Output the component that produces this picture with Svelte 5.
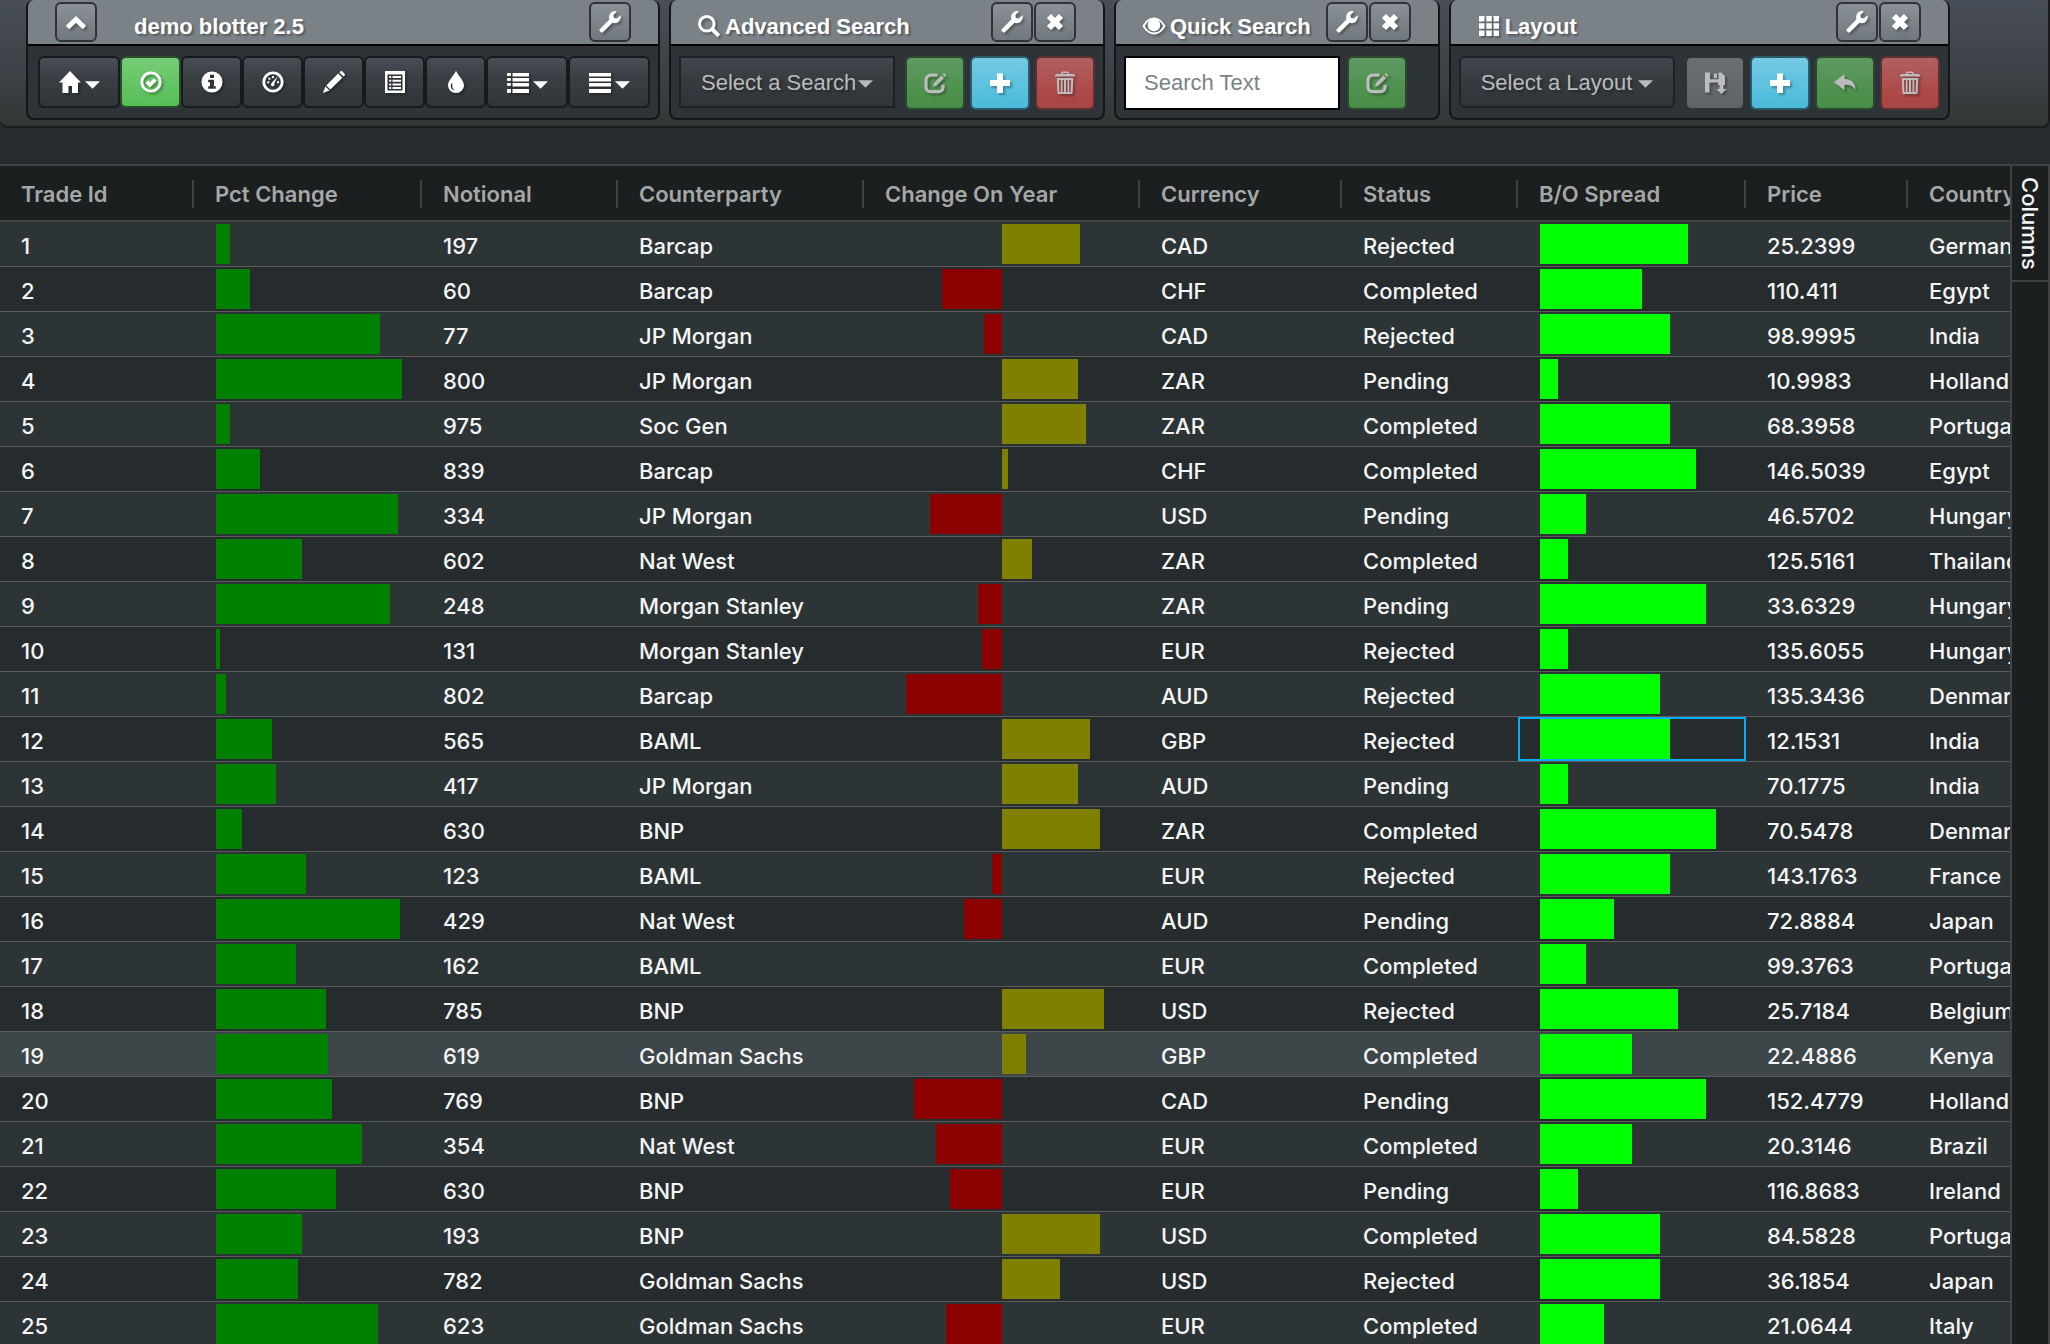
<script>
  const icons = {
    up: '<path d="M2.5 16.5 11 8.5l8.500 8" fill="none" stroke="currentColor" stroke-width="5"/>',
    wrench:
      '<path d="M.8 18.200 10.400 8.600C9.400 5 11 1.200 14.600.3c1-.3 2-.2 3.200.1L14.400 3.900l.5 3.100 3.100.5L21.500 4.200c.6 2.500-.2 4.900-1.900 6.500-1.600 1.500-4.100 1.800-6.100 1L3.900 21.300c-.5.5-1.200.5-1.700 0L.7 19.900c-.5-.5-.4-1.200.1-1.700z"/>',
    close: '<path d="m5 5 12 12M17 5 5 17" fill="none" stroke="currentColor" stroke-width="6"/>',
    home: '<path d="M11 0 22 11.500h-3V22h-6v-7H9.500v7h-6V11.500H0z"/>',
    okCircle:
      '<circle cx="11" cy="11" r="9.200" fill="none" stroke="currentColor" stroke-width="2.800"/><path d="m6.800 10.600 3.200 3.200 5.200-5.200" fill="none" stroke="currentColor" stroke-width="3.800"/>',
    info: '<path fill-rule="evenodd" d="M11 .5a10.500 10.500 0 1 0 0 21 10.500 10.500 0 0 0 0-21zM9 3.800h4v3.300H9zM7.200 8.800H13v6.500h1.800v2.500H7.200v-2.500H9v-4H7.200z"/>',
    gauge:
      '<circle cx="11" cy="11" r="9.200" fill="none" stroke="currentColor" stroke-width="2.800"/><path d="M5.200 10.200h2v2h-2zM6.400 6.800h2v2h-2zM9.900 4.900h2v2h-2zM15 10.200h2v2h-2z"/><path d="M15.600 5.200 12.300 12.500a1.800 1.800 0 1 1-2.600-.5z"/>',
    pencil:
      '<path d="M16.400 1.400 17.600.3c.5-.4 1-.4 1.500 0l2.600 2.600c.4.500.4 1 0 1.500l-1.200 1.200zM15.200 2.600l4.100 4.100L7.400 18.600l-4.100-4.100zM2.400 15.500l4.100 4.100L0 22z"/>',
    listAlt:
      '<path fill-rule="evenodd" d="M1 0h20v22H1zM3.500 3.500v16h15v-16z"/><path d="M5.200 5h2v2h-2zM8.500 5h8.500v2H8.500zM5.200 8.700h2v2h-2zM8.500 8.700h8.500v2H8.500zM5.200 12.400h2v2h-2zM8.500 12.400h8.500v2H8.500zM5.200 16h2v2h-2zM8.500 16h8.500v2H8.500z"/>',
    drop: '<path fill-rule="evenodd" d="M11-.8c.8 4.300 8 9.300 8 15.200A8 7.600 0 0 1 3 14.400C3 8.500 10.200 3.500 11-.8zM6.400 12.200c-1.500 3.200-.2 6.400 3.200 7.300-2-2-2.900-4-2.200-7z"/>',
    list: '<path d="M1 2h2a1 1 0 0 1 1 1v1a1 1 0 0 1-1 1H1a1 1 0 0 1-1-1V3a1 1 0 0 1 1-1zM5.500 2H22v3.500H5.500zM1 7h2a1 1 0 0 1 1 1v1a1 1 0 0 1-1 1H1a1 1 0 0 1-1-1V8a1 1 0 0 1 1-1zM5.500 7H22v3.500H5.500zM1 12h2a1 1 0 0 1 1 1v1a1 1 0 0 1-1 1H1a1 1 0 0 1-1-1v-1a1 1 0 0 1 1-1zM5.500 12H22v3.500H5.500zM1 18h2a1 1 0 0 1 1 1v2a1 1 0 0 1-1 1H1a1 1 0 0 1-1-1v-2a1 1 0 0 1 1-1zM5.500 18H22v4H5.500z"/>',
    justify: '<path d="M0 2h22v3.500H0zM0 7h22v3.500H0zM0 12h22v3.500H0zM0 18h22v4H0z"/>',
    search:
      '<circle cx="8.800" cy="8.800" r="7.300" fill="none" stroke="currentColor" stroke-width="3"/><path d="m14 14 6.800 6.800" fill="none" stroke="currentColor" stroke-width="4"/>',
    edit: '<path d="M13.500 3.200H6.500a4.500 4.500 0 0 0-4.500 4.500v7.500a4.500 4.500 0 0 0 4.500 4.500h8a4.500 4.500 0 0 0 4.500-4.500v-2.500" fill="none" stroke="currentColor" stroke-width="3.200"/><path d="M17.300 3.600 20 6.300 12.500 13.400 8.800 14.700 10 11zM18.600 2.300 20 1l2.400 2.600-1.200 1.400z"/>',
    plus: '<path d="M8 1.500h6V8h7v6h-7v7H8v-7H1V8h7z"/>',
    trash:
      '<path fill-rule="evenodd" d="M7 2V1a1.800 1.800 0 0 1 1.800-1.500h4.400A1.800 1.800 0 0 1 15 1v1h4.500l1.500 1v1.600H1V3l1.500-1zM8.600 2h4.800V1H8.600z"/><path fill-rule="evenodd" d="M2.800 6h16.400l-.6 14.500A1.600 1.600 0 0 1 17 22H5a1.600 1.600 0 0 1-1.600-1.500zM5 8l.4 12h1.400V8zM8.500 8v12H10V8zM12 8v12h1.500V8zM15.200 8v12h1.400L17 8z"/>',
    eye: '<path fill-rule="evenodd" d="M11 2.500c5 0 9 4 11.500 8.500C20 15.500 16 19.500 11 19.500S2 15.500-.5 11C2 6.500 6 2.500 11 2.500zM6.500 5.700C4.300 6.900 3 8.800 1.800 11c2 3.700 5.200 6.500 9.200 6.500s7.200-2.800 9.200-6.500c-1.200-2.200-2.500-4.100-4.700-5.300a6.300 6.300 0 1 1-9 0z"/><path d="M11 5.200a5 5 0 0 1 4.600 4.900 4.600 4.600 0 0 1-9.200 0c0-1.200.4-2.200 1.100-3 .2 2.200 1 3.500 2.700 3.900 1-2 1.600-3.800.8-5.800z"/>',
    grid: '<path d="M1 1h5.500v5.500H1zM8.300 1h5.500v5.500H8.300zM15.600 1H21v5.500h-5.400zM1 8.300h5.500v5.500H1zM8.300 8.300h5.500v5.500H8.300zM15.600 8.300H21v5.500h-5.400zM1 15.600h5.500V21H1zM8.300 15.600h5.500V21H8.300zM15.600 15.600H21V21h-5.400z"/>',
    save: '<path d="M1 .5h5v6.800h8.500V.5h2.800L21 4v9h-7v-2.500H5.500V20.500H1zM10 1.500h3v4.500h-3z"/><path d="M15.500 11.500h4V17h3L17.500 22l-5-5h3z"/>',
    undo: '<path d="M10.500 2v5C17 7 21.500 10.500 21.700 17.700 19 14 15.500 12.700 10.500 12.700v5.600L0 10.200z"/>'
  };

  const tools = [
    { icon: 'home', label: 'Dashboard home', caret: true },
    { icon: 'okCircle', label: 'Status', green: true },
    { icon: 'info', label: 'Information' },
    { icon: 'gauge', label: 'Gauges' },
    { icon: 'pencil', label: 'Edit' },
    { icon: 'listAlt', label: 'Column chooser' },
    { icon: 'drop', label: 'Theme' },
    { icon: 'list', label: 'Functions', caret: true },
    { icon: 'justify', label: 'Menu', caret: true }
  ];

  const columns = [
    ['Trade Id', 'w194'],
    ['Pct Change', 'w228'],
    ['Notional', 'w196'],
    ['Counterparty', 'w246'],
    ['Change On Year', 'w276'],
    ['Currency', 'w202'],
    ['Status', 'w176'],
    ['B/O Spread', 'w228'],
    ['Price', 'w162'],
    ['Country', 'w196']
  ];

  // pct change, notional, counterparty, change on year, currency, status, spread, price, country
  const rows = [
    [7, 197, 'Barcap', 39, 'CAD', 'Rejected', 74, '25.2399', 'Germany'],
    [17, 60, 'Barcap', -30, 'CHF', 'Completed', 51, '110.411', 'Egypt'],
    [82, 77, 'JP Morgan', -9, 'CAD', 'Rejected', 65, '98.9995', 'India'],
    [93, 800, 'JP Morgan', 38, 'ZAR', 'Pending', 9, '10.9983', 'Holland'],
    [7, 975, 'Soc Gen', 42, 'ZAR', 'Completed', 65, '68.3958', 'Portugal'],
    [22, 839, 'Barcap', 3, 'CHF', 'Completed', 78, '146.5039', 'Egypt'],
    [91, 334, 'JP Morgan', -36, 'USD', 'Pending', 23, '46.5702', 'Hungary'],
    [43, 602, 'Nat West', 15, 'ZAR', 'Completed', 14, '125.5161', 'Thailand'],
    [87, 248, 'Morgan Stanley', -12, 'ZAR', 'Pending', 83, '33.6329', 'Hungary'],
    [2, 131, 'Morgan Stanley', -10, 'EUR', 'Rejected', 14, '135.6055', 'Hungary'],
    [5, 802, 'Barcap', -48, 'AUD', 'Rejected', 60, '135.3436', 'Denmark'],
    [28, 565, 'BAML', 44, 'GBP', 'Rejected', 65, '12.1531', 'India'],
    [30, 417, 'JP Morgan', 38, 'AUD', 'Pending', 14, '70.1775', 'India'],
    [13, 630, 'BNP', 49, 'ZAR', 'Completed', 88, '70.5478', 'Denmark'],
    [45, 123, 'BAML', -5, 'EUR', 'Rejected', 65, '143.1763', 'France'],
    [92, 429, 'Nat West', -19, 'AUD', 'Pending', 37, '72.8884', 'Japan'],
    [40, 162, 'BAML', 0, 'EUR', 'Completed', 23, '99.3763', 'Portugal'],
    [55, 785, 'BNP', 51, 'USD', 'Rejected', 69, '25.7184', 'Belgium'],
    [56, 619, 'Goldman Sachs', 12, 'GBP', 'Completed', 46, '22.4886', 'Kenya'],
    [58, 769, 'BNP', -44, 'CAD', 'Pending', 83, '152.4779', 'Holland'],
    [73, 354, 'Nat West', -33, 'EUR', 'Completed', 46, '20.3146', 'Brazil'],
    [60, 630, 'BNP', -26, 'EUR', 'Pending', 19, '116.8683', 'Ireland'],
    [43, 193, 'BNP', 49, 'USD', 'Completed', 60, '84.5828', 'Portugal'],
    [41, 782, 'Goldman Sachs', 29, 'USD', 'Rejected', 60, '36.1854', 'Japan'],
    [81, 623, 'Goldman Sachs', -28, 'EUR', 'Completed', 32, '21.0644', 'Italy']
  ];
  const barWidth = (v) => `width:${Math.abs(v) * 2}px`;
  const activeRow = 12;
  const hoverRow = 19;
</script>

{#snippet icon(name)}
  <svg class="icon" viewBox="0 0 22 22" aria-hidden="true">{@html icons[name]}</svg>
{/snippet}

{#snippet caret()}
  <svg class="caret" viewBox="0 0 16 8" aria-hidden="true"><path d="M0 0h16L8 8z" /></svg>
{/snippet}

{#snippet headTools(closable)}
  <div class="head-tools">
    <button class="mini" aria-label="Configure">{@render icon('wrench')}</button>
    {#if closable}<button class="mini" aria-label="Close">{@render icon('close')}</button>{/if}
  </div>
{/snippet}

<div class="page">
  <header class="dashboard">
    <section class="panel">
      <div class="head">
        <button class="mini collapse" aria-label="Collapse">{@render icon('up')}</button>
        <h2>demo blotter 2.5</h2>
        {@render headTools(false)}
      </div>
      <div class="body tight">
        {#each tools as t}
          <button class="tool" class:wide={t.caret} class:green={t.green} aria-label={t.label}>
            {@render icon(t.icon)}
            {#if t.caret}{@render caret()}{/if}
          </button>
        {/each}
      </div>
    </section>

    <section class="panel">
      <div class="head">
        {@render icon('search')}
        <h2>Advanced Search</h2>
        {@render headTools(true)}
      </div>
      <div class="body">
        <div class="picker">
          <select aria-label="Select a Search"><option>Select a Search</option></select>
          {@render caret()}
        </div>
        <button class="action green dim" aria-label="Edit search">{@render icon('edit')}</button>
        <button class="action blue" aria-label="New search">{@render icon('plus')}</button>
        <button class="action red dim" aria-label="Delete search">{@render icon('trash')}</button>
      </div>
    </section>

    <section class="panel">
      <div class="head">
        {@render icon('eye')}
        <h2>Quick Search</h2>
        {@render headTools(true)}
      </div>
      <div class="body">
        <input type="text" placeholder="Search Text" aria-label="Search Text" />
        <button class="action green dim spaced" aria-label="Edit quick search">{@render icon('edit')}</button>
      </div>
    </section>

    <section class="panel">
      <div class="head">
        {@render icon('grid')}
        <h2>Layout</h2>
        {@render headTools(true)}
      </div>
      <div class="body">
        <div class="picker round">
          <select aria-label="Select a Layout"><option>Select a Layout</option></select>
          {@render caret()}
        </div>
        <button class="action grey dim" aria-label="Save layout">{@render icon('save')}</button>
        <button class="action blue" aria-label="New layout">{@render icon('plus')}</button>
        <button class="action green dim" aria-label="Undo">{@render icon('undo')}</button>
        <button class="action red dim" aria-label="Delete layout">{@render icon('trash')}</button>
      </div>
    </section>
  </header>

  <main class="grid">
    <div class="viewport">
      <table>
        <colgroup>
          {#each columns as [, width]}<col class={width} />{/each}
        </colgroup>
        <thead>
          <tr>
            {#each columns as [name]}<th scope="col"><div>{name}</div></th>{/each}
          </tr>
        </thead>
        <tbody>
          {#each rows as [pct, notional, party, change, currency, status, spread, price, country], i}
            <tr class:hover={i + 1 === hoverRow}>
              <td>{i + 1}</td>
              <td class="bars"><div class="bar pct" style={barWidth(pct)}></div></td>
              <td>{notional}</td>
              <td>{party}</td>
              <td class="bars">
                <div class="split">
                  <div class="bar" class:gain={change > 0} class:loss={change < 0} style={barWidth(change)}></div>
                </div>
              </td>
              <td>{currency}</td>
              <td>{status}</td>
              <td class="bars" class:active={i + 1 === activeRow}>
                <div class="bar spread" style={barWidth(spread)}></div>
              </td>
              <td>{price}</td>
              <td>{country}</td>
            </tr>
          {/each}
        </tbody>
      </table>
    </div>
    <aside>
      <button class="side-tab">Columns</button>
    </aside>
  </main>
</div>

<style>
  :global(body) {
    background: #272b30;
  }
  .page,
  .page * {
    box-sizing: border-box;
  }
  .page {
    display: flex;
    flex-direction: column;
    gap: 36px;
    height: 100vh;
    overflow: hidden;
    background: #262b2f;
    font-family: 'Liberation Sans', Arial, sans-serif;
    font-size: 22px;
    color: #fff;
  }
  button,
  input,
  select {
    font: inherit;
    color: inherit;
    margin: 0;
    padding: 0;
  }
  button {
    display: flex;
    align-items: center;
    justify-content: center;
    cursor: pointer;
  }
  .icon {
    flex: none;
    width: 22px;
    height: 22px;
    fill: currentColor;
    overflow: visible;
    filter: drop-shadow(2px 2px 1px rgba(0, 0, 0, 0.3));
  }
  .caret {
    flex: none;
    width: 15px;
    height: 8px;
    fill: currentColor;
  }

  .dashboard {
    display: flex;
    align-items: flex-start;
    gap: 9px;
    padding: 0 26px 6px;
    border: 2px solid #1a1c1e;
    border-width: 0 2px 2px 0;
    border-radius: 0 0 8px 8px;
    background: linear-gradient(#484e57, #3c4146 60%, #313635);
  }
  .panel {
    flex: none;
    border: 2px solid #141517;
    border-top: 0;
    border-radius: 8px;
    background: #2e3338;
    overflow: hidden;
  }
  .head {
    display: flex;
    align-items: center;
    gap: 5px;
    height: 46px;
    padding: 0 27px;
    border-bottom: 2px solid #000;
    background: #7a8288;
  }
  h2 {
    margin: 0 10px 0 0;
    padding-top: 10px;
    font-size: 22px;
    line-height: 26px;
    font-weight: 700;
    white-space: nowrap;
    text-shadow: 2px 2px 2px rgba(0, 0, 0, 0.3);
  }
  .head > .icon {
    margin-top: 8px;
  }
  .head-tools {
    display: flex;
    gap: 1px;
    margin-left: auto;
  }
  .mini {
    width: 42px;
    height: 40px;
    border: 2px solid #2f3336;
    border-radius: 6px;
    background: linear-gradient(#8a9196, #7a8288 60%, #70787d);
  }
  .collapse {
    margin-right: 32px;
  }

  .body {
    display: flex;
    gap: 5px;
    height: 72px;
    padding: 10px 8px;
  }
  .tight {
    gap: 0;
    padding: 10px 8px 10px 10px;
  }
  .tool {
    gap: 4px;
    width: 61px;
    height: 52px;
    border: 2px solid #17191b;
    border-radius: 6px;
    background: linear-gradient(#484e57, #3a3f44 40%, #313539);
  }
  .tool.wide {
    width: 82px;
  }
  .wide .caret {
    margin-top: 6px;
  }
  .action {
    width: 60px;
    height: 54px;
    border: 2px solid;
    border-radius: 6px;
  }
  .green {
    border-color: #2b4d2b;
    background: linear-gradient(#78cc78, #62c462 60%, #56be56);
  }
  .dim {
    color: #bcbcbc;
  }
  .green.dim {
    border-color: #2c482f;
    background: linear-gradient(#5f9962, #4f9250 60%, #488d48);
  }
  .blue {
    border-color: #2b5a6b;
    background: linear-gradient(#74cae3, #5bc0de 60%, #4ab9db);
  }
  .red.dim {
    border-color: #5a3033;
    background: linear-gradient(#b16062, #ad4c4b 60%, #a94442);
  }
  .grey.dim {
    border-color: #2e3338;
    background: linear-gradient(#6a6f73, #5e6468) padding-box;
  }
  .spaced {
    margin-left: 2px;
  }
  .picker {
    display: grid;
    align-items: center;
    width: 216px;
    height: 52px;
    margin-right: 5px;
    color: #b9bbbc;
  }
  .picker select,
  .picker .caret {
    grid-area: 1 / 1;
  }
  .picker select {
    appearance: none;
    width: 100%;
    height: 100%;
    padding: 0 38px 0 20px;
    border: 2px solid #1f2224;
    border-radius: 0;
    background: linear-gradient(#41464c, #373b40 50%, #303438);
    text-shadow: 2px 2px 2px rgba(0, 0, 0, 0.3);
  }
  .picker.round select {
    border-radius: 6px;
  }
  .picker .caret {
    justify-self: end;
    margin: 3px 22px 0 0;
    pointer-events: none;
  }
  input {
    width: 216px;
    height: 54px;
    padding: 0 18px;
    border: 2px solid #000;
    border-radius: 0;
    background: #fff;
    color: #272b30;
  }
  input::placeholder {
    color: #7a8288;
    opacity: 1;
  }

  .grid {
    flex: 1;
    display: flex;
    min-height: 0;
    border: 2px solid #424242;
    border-width: 2px 2px 0 0;
    font-family: Inter, 'Liberation Sans', sans-serif;
    font-size: 22px;
    color: #f5f5f5;
  }
  .viewport {
    flex: 1;
    min-width: 0;
    overflow: hidden;
    background: #2d3436;
  }
  table {
    table-layout: fixed;
    width: 2104px;
    border-spacing: 0;
  }
  .w162 {
    width: 162px;
  }
  .w176 {
    width: 176px;
  }
  .w194 {
    width: 194px;
  }
  .w196 {
    width: 196px;
  }
  .w202 {
    width: 202px;
  }
  .w228 {
    width: 228px;
  }
  .w246 {
    width: 246px;
  }
  .w276 {
    width: 276px;
  }
  th {
    height: 56px;
    padding: 2px 0 0;
    border-bottom: 2px solid #424242;
    background: #1c1f20;
    color: #a6a7a7;
    font-weight: 600;
    text-align: left;
  }
  th div {
    height: 28px;
    padding-left: 21px;
    border-right: 2px solid #424242;
    line-height: 28px;
    white-space: nowrap;
  }
  td {
    height: 45px;
    padding: 4px 0 0 21px;
    border-bottom: 1px solid #5c5c5c;
    line-height: 28px;
    font-weight: 500;
    white-space: nowrap;
  }
  tbody tr:nth-child(even) {
    background: #262c2e;
  }
  tbody tr.hover {
    background: #3d4749;
  }
  td.bars {
    padding: 2px 22px;
  }
  .bar {
    height: 40px;
  }
  .pct {
    background: #008000;
  }
  .spread {
    background: #00ff00;
  }
  .split {
    display: grid;
    grid-template-columns: 1fr 1fr;
  }
  .gain {
    grid-column: 2;
    background: #808000;
  }
  .loss {
    grid-column: 1;
    justify-self: end;
    background: #8b0000;
  }
  .active {
    box-shadow: inset 0 0 0 2px #00b0ff;
  }
  aside {
    flex: none;
    width: 38px;
    border-left: 2px solid #424242;
    background: #1c1f20;
  }
  .side-tab {
    width: 36px;
    height: 116px;
    border: 0;
    border-bottom: 2px solid #424242;
    background: none;
    font-weight: 500;
    writing-mode: vertical-rl;
  }
</style>
